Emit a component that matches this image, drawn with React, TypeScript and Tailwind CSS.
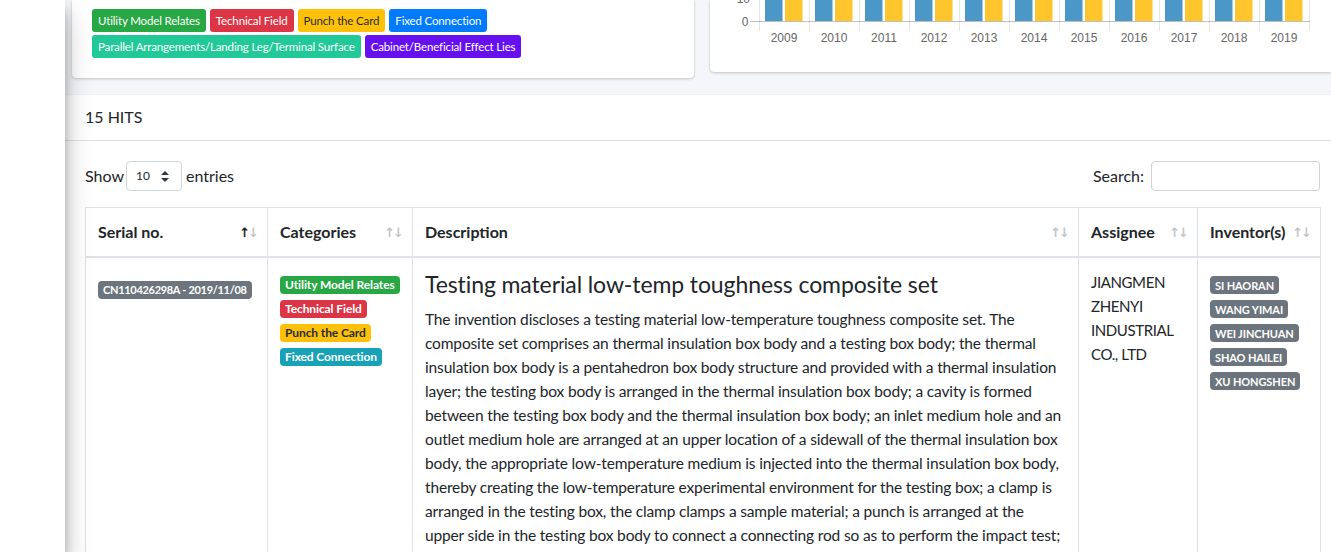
import React from "react";

const topTags = [
  { label: "Utility Model Relates", cls: "bg-[#28a745] text-white" },
  { label: "Technical Field", cls: "bg-[#dc3545] text-white" },
  { label: "Punch the Card", cls: "bg-[#ffc107] text-[#1f2d3d]" },
  { label: "Fixed Connection", cls: "bg-[#007bff] text-white" },
  { label: "Parallel Arrangements/Landing Leg/Terminal Surface", cls: "bg-[#20c997] text-white" },
  { label: "Cabinet/Beneficial Effect Lies", cls: "bg-[#6610f2] text-white" },
];

const rowTags = [
  { label: "Utility Model Relates", cls: "bg-[#28a745] text-white" },
  { label: "Technical Field", cls: "bg-[#dc3545] text-white" },
  { label: "Punch the Card", cls: "bg-[#ffc107] text-[#1f2d3d]" },
  { label: "Fixed Connection", cls: "bg-[#17a2b8] text-white" },
];

const inventors = ["SI HAORAN", "WANG YIMAI", "WEI JINCHUAN", "SHAO HAILEI", "XU HONGSHEN"];

const years = [2009, 2010, 2011, 2012, 2013, 2014, 2015, 2016, 2017, 2018, 2019];

const descLines = [
  "The invention discloses a testing material low-temperature toughness composite set. The",
  "composite set comprises an thermal insulation box body and a testing box body; the thermal",
  "insulation box body is a pentahedron box body structure and provided with a thermal insulation",
  "layer; the testing box body is arranged in the thermal insulation box body; a cavity is formed",
  "between the testing box body and the thermal insulation box body; an inlet medium hole and an",
  "outlet medium hole are arranged at an upper location of a sidewall of the thermal insulation box",
  "body, the appropriate low-temperature medium is injected into the thermal insulation box body,",
  "thereby creating the low-temperature experimental environment for the testing box; a clamp is",
  "arranged in the testing box, the clamp clamps a sample material; a punch is arranged at the",
  "upper side in the testing box body to connect a connecting rod so as to perform the impact test;",
  "the punch and the sample material are arranged correspondingly; and the composite set is simple",
];

function Badge({ children, cls }: { children: React.ReactNode; cls: string }) {
  return (
    <span className={`inline-flex h-[18px] w-fit items-center whitespace-nowrap rounded-[4px] px-[5px] font-bold leading-none ${cls}`}>
      {children}
    </span>
  );
}

function SortIcon({ active }: { active?: boolean }) {
  return (
    <span className="absolute right-[10px] top-1/2 -translate-y-1/2 font-['DejaVu_Sans',sans-serif] text-[13px] leading-none tracking-[-2px]">
      <span className={active ? "text-[#212529]" : "text-[#c4c6c8]"}>↑</span>
      <span className="text-[#c4c6c8]">↓</span>
    </span>
  );
}

function Chart() {
  return (
    <svg width="621" height="50" className="block">
      <text x="40" y="2.5" textAnchor="end" fontSize="12" fill="#666" fontFamily="Liberation Sans, Arial, sans-serif">
        10
      </text>
      <text x="38.5" y="25.5" textAnchor="end" fontSize="12" fill="#666" fontFamily="Liberation Sans, Arial, sans-serif">
        0
      </text>
      {years.map((y, i) => {
        const gx = 49 + 50 * i;
        return (
          <g key={y}>
            <rect x={gx + 6} y={0} width={17.5} height={21} fill="#4b97c8" />
            <rect x={gx + 26} y={0} width={17.5} height={21} fill="#fec52c" />
            <text x={gx + 25} y={42} textAnchor="middle" fontSize="12" fill="#666" fontFamily="Liberation Sans, Arial, sans-serif">
              {y}
            </text>
          </g>
        );
      })}
      {Array.from({ length: 12 }).map((_, i) => (
        <line key={i} x1={49.5 + 50 * i} y1={0} x2={49.5 + 50 * i} y2={31} stroke="rgba(0,0,0,0.1)" />
      ))}
      <line x1={40} y1={21.5} x2={600} y2={21.5} stroke="rgba(0,0,0,0.25)" />
    </svg>
  );
}

export default function App() {
  return (
    <div className="flex h-screen w-full overflow-hidden bg-[#f4f6f9] font-['Lato','Noto_Sans',sans-serif] text-[16px] text-[#212529]">
      <aside className="relative z-10 w-[65px] shrink-0 bg-white shadow-[0_14px_28px_rgba(0,0,0,0.25),0_10px_10px_rgba(0,0,0,0.22)]" />

      <main className="flex min-w-0 flex-1 flex-col">
        <div className="flex items-start">
          <div className="ml-[7px] h-[78px] w-[622px] rounded-b-[4px] bg-white px-[20px] pt-[9px] shadow-[0_0_1px_rgba(0,0,0,0.125),0_1px_3px_rgba(0,0,0,0.2)]">
            <div className="flex flex-wrap gap-x-[4px] gap-y-[3px]">
              {topTags.map((t) => (
                <span key={t.label} className={`inline-flex h-[23px] items-center whitespace-nowrap rounded-[3px] px-[6px] text-[11.5px] tracking-[-0.15px] ${t.cls}`}>
                  {t.label}
                </span>
              ))}
            </div>
          </div>
          <div className="ml-[16px] h-[72px] flex-1 rounded-bl-[4px] bg-white shadow-[0_0_1px_rgba(0,0,0,0.125),0_1px_3px_rgba(0,0,0,0.2)]">
            <Chart />
          </div>
        </div>

        <section className="mt-[17px] flex-1 bg-white shadow-[0_0_1px_rgba(0,0,0,0.125)]">
          <div className="flex h-[46px] items-center border-b border-[#dee2e6] px-[20px] pb-[2px]">15 HITS</div>

          <div className="pl-[20px] pr-[11px] pt-[20px]">
            <div className="flex h-[30px] items-center justify-between">
              <div className="flex items-center">
                <span>Show</span>
                <div className="ml-[2px] mr-[4px] flex h-[30px] w-[56px] items-center justify-between rounded-[4px] border border-[#ced4da] pl-[9px] pr-[12px] text-[12px]">
                  <span>10</span>
                  <svg width="8" height="11" viewBox="0 0 8 11">
                    <path d="M4 0 L8 4 H0 Z M4 11 L0 7 H8 Z" fill="#343a40" />
                  </svg>
                </div>
                <span>entries</span>
              </div>
              <div className="flex items-center">
                <span>Search:</span>
                <div className="ml-[7px] h-[30px] w-[169px] rounded-[4px] border border-[#ced4da]" />
              </div>
            </div>

            <table className="mt-[16px] w-[1235px] table-fixed border-collapse">
              <colgroup>
                <col className="w-[182px]" />
                <col className="w-[145px]" />
                <col className="w-[666px]" />
                <col className="w-[119px]" />
                <col className="w-[123px]" />
              </colgroup>
              <thead>
                <tr className="text-left">
                  {["Serial no.", "Categories", "Description", "Assignee", "Inventor(s)"].map((h, i) => (
                    <th key={h} className="relative border border-b-2 border-[#dee2e6] px-[12px] py-[12px] font-bold leading-[24px]">
                      {h}
                      <SortIcon active={i === 0} />
                    </th>
                  ))}
                </tr>
              </thead>
              <tbody>
                <tr className="align-top">
                  <td className="border border-[#dee2e6] px-[12px] pb-[12px] pt-[18px]">
                    <Badge cls="bg-[#6c757d] text-white text-[11px] tracking-[-0.3px]">CN110426298A - 2019/11/08</Badge>
                  </td>
                  <td className="border border-[#dee2e6] px-[12px] pb-[12px] pt-[18px]">
                    <div className="flex flex-col gap-[6px]">
                      {rowTags.map((t) => (
                        <Badge key={t.label} cls={`text-[12px] tracking-[-0.1px] ${t.cls}`}>
                          {t.label}
                        </Badge>
                      ))}
                    </div>
                  </td>
                  <td className="border border-[#dee2e6] px-[12px] py-[12px]">
                    <h4 className="mb-[8px] text-[23px] leading-[29px] tracking-[-0.1px]">Testing material low-temp toughness composite set</h4>
                    <div className="text-[15.5px] leading-[24px] tracking-[-0.15px]">
                      {descLines.map((l) => (
                        <div key={l} className="whitespace-nowrap">
                          {l}
                        </div>
                      ))}
                    </div>
                  </td>
                  <td className="border border-[#dee2e6] px-[12px] py-[12px] text-[15px] leading-[24px] tracking-[-0.4px]">
                    <div>JIANGMEN</div>
                    <div>ZHENYI</div>
                    <div>INDUSTRIAL</div>
                    <div>CO., LTD</div>
                  </td>
                  <td className="border border-[#dee2e6] px-[12px] pb-[12px] pt-[18px]">
                    <div className="flex flex-col gap-[6px]">
                      {inventors.map((n) => (
                        <Badge key={n} cls="bg-[#6c757d] text-white text-[11px] tracking-[-0.1px]">
                          {n}
                        </Badge>
                      ))}
                    </div>
                  </td>
                </tr>
              </tbody>
            </table>
          </div>
        </section>
      </main>
    </div>
  );
}
